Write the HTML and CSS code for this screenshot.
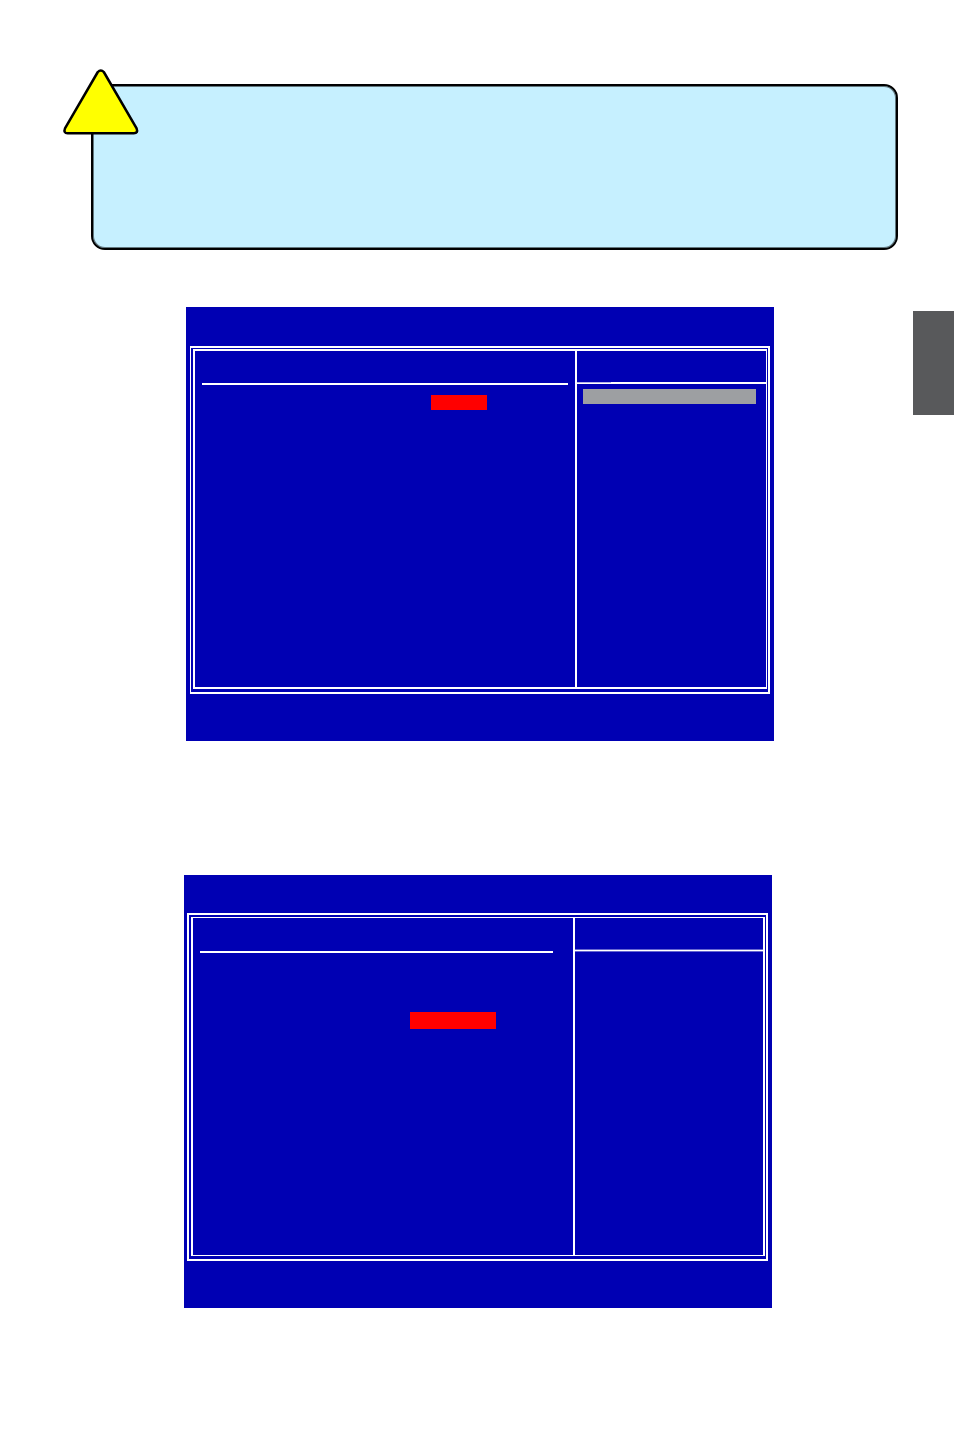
FILE: index.html
```
<!DOCTYPE html>
<html lang="en">
<head>
  <meta charset="UTF-8" />
  <meta name="viewport" content="width=device-width, initial-scale=1" />
  <title>BIOS Setup</title>
  <link rel="stylesheet" href="styles.css">
</head>
<body>
  <main class="page">
    <aside class="note">
      <svg class="note-icon" width="78" height="68" viewBox="0 0 78 68" aria-hidden="true">
        <path d="M35.8 4 Q38.8 0.8 41.8 4 L74.6 60.4 Q76.4 65.2 71.8 65.2 H5.6 Q1.2 65.2 3 60.4 Z" fill="#ffff00" stroke="#000" stroke-width="2.5" stroke-linejoin="round"/>
      </svg>
    </aside>

    <div class="row">
      <section class="screen screen-first">
        <div class="frame">
          <div class="panes">
            <div class="pane pane-main">
              <div class="rule"></div>
              <div class="value"></div>
            </div>
            <div class="pane pane-help">
              <div class="rule"></div>
              <div class="help-bar"></div>
            </div>
          </div>
        </div>
      </section>
      <div class="side-tab"></div>
    </div>

    <div class="row">
      <section class="screen screen-second">
        <div class="frame">
          <div class="panes">
            <div class="pane pane-main">
              <div class="rule"></div>
              <div class="value"></div>
            </div>
            <div class="pane pane-help">
              <div class="rule"></div>
            </div>
          </div>
        </div>
      </section>
    </div>
  </main>
</body>
</html>
```
FILE: styles.css
```
* {
  box-sizing: border-box;
}
body {
  margin: 0;
  background-color: #fff;
  font-family: "Liberation Sans", Arial, sans-serif;
}
.page {
  padding: 84px 0 144px;
}

/* note box */
.note {
  position: relative;
  min-height: 166px;
  margin: 0 56px 57px 91px;
  border: 2px solid #000;
  border-radius: 14px;
  background-color: #c6f0ff;
  box-shadow: inset 0 0 0 1px rgba(0, 0, 0, 0.5);
}
.note-icon {
  position: absolute;
  top: -18px;
  left: -31px;
}

/* setup screens */
.row {
  display: flex;
  align-items: flex-start;
  justify-content: space-between;
}
.row + .row {
  margin-top: 134px;
}
.screen {
  flex: 0 1 588px;
  background-color: #0000b3;
}
.frame {
  border: 2px solid #fff;
}
.panes {
  display: grid;
  min-height: 340px;
  border: 2px solid #fff;
}
.pane-help {
  padding-top: 31px;
  border-left: 2px solid #fff;
}
.rule {
  height: 2px;
  background-color: #fff;
}
.value {
  background-color: #ff0000;
}

.screen-first {
  margin-left: 186px;
  padding: 39px 4px 47px;
}
.screen-first .frame {
  padding: 1px 1px 3px 2px;
  border-left-width: 1px;
}
.screen-first .panes {
  grid-template-columns: 1fr 191px;
  border-right-width: 1px;
}
.screen-first .pane-main {
  padding: 32px 7px 0;
}
.screen-first .value {
  width: 56px;
  height: 15px;
  margin: 10px 0 0 229px;
}
.screen-first .pane-help .rule {
  background: linear-gradient(to right, #b3b3e8 34px, #fff 34px) top / 100% 1px no-repeat #fff;
}
.help-bar {
  height: 15px;
  margin: 5px 10px 0 6px;
  background-color: #9d9fa2;
}

.screen-second {
  margin-left: 184px;
  padding: 38px 4px 47px 3px;
}
.screen-second .frame {
  padding: 2px 1px 3px 2px;
}
.screen-second .panes {
  grid-template-columns: 1fr 190px;
  min-height: 339px;
  border-width: 1px 2px;
}
.screen-second .pane-main {
  padding: 33px 20px 0 7px;
}
.screen-second .value {
  width: 86px;
  height: 17px;
  margin: 59px 0 0 210px;
}
.screen-second .pane-help .rule {
  height: 3px;
  background: linear-gradient(#6666d1 1px, #fff 1px, #fff 2px, #6666d1 2px);
}

/* page edge marker */
.side-tab {
  width: 41px;
  height: 104px;
  margin-top: 4px;
  background-color: #58595b;
}
```
